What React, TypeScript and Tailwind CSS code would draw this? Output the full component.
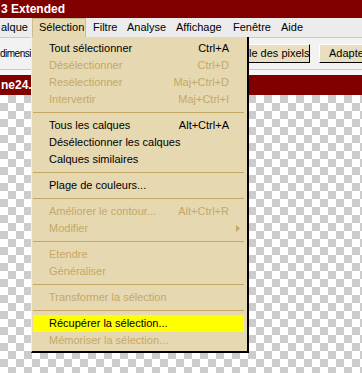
type Item = {
  label: string;
  shortcut?: string;
  disabled?: boolean;
  active?: boolean;
  submenu?: boolean;
};

type Entry = Item | "sep";

const menu: Entry[] = [
  { label: "Tout sélectionner", shortcut: "Ctrl+A" },
  { label: "Désélectionner", shortcut: "Ctrl+D", disabled: true },
  { label: "Resélectionner", shortcut: "Maj+Ctrl+D", disabled: true },
  { label: "Intervertir", shortcut: "Maj+Ctrl+I", disabled: true },
  "sep",
  { label: "Tous les calques", shortcut: "Alt+Ctrl+A" },
  { label: "Désélectionner les calques" },
  { label: "Calques similaires" },
  "sep",
  { label: "Plage de couleurs..." },
  "sep",
  { label: "Améliorer le contour...", shortcut: "Alt+Ctrl+R", disabled: true },
  { label: "Modifier", disabled: true, submenu: true },
  "sep",
  { label: "Etendre", disabled: true },
  { label: "Généraliser", disabled: true },
  "sep",
  { label: "Transformer la sélection", disabled: true },
  "sep",
  { label: "Récupérer la sélection...", active: true },
  { label: "Mémoriser la sélection...", disabled: true },
];

const menubar = [
  { label: "alque", w: "w-[32px]", pl: "pl-[1px]" },
  { label: "Sélection", w: "w-[54px]", pl: "pl-[6px]", open: true },
  { label: "Filtre", w: "w-[35px]", pl: "pl-[7px]" },
  { label: "Analyse", w: "w-[49px]", pl: "pl-[6px]" },
  { label: "Affichage", w: "w-[57px]", pl: "pl-[6px]" },
  { label: "Fenêtre", w: "w-[48px]", pl: "pl-[6px]" },
  { label: "Aide", w: "w-[40px]", pl: "pl-[6px]" },
];

function App() {
  return (
    <div className="relative w-[362px] h-[373px] overflow-hidden flex flex-col bg-white font-['Liberation_Sans',Arial,sans-serif] text-[11px] text-black">
      {/* title bar */}
      <div className="h-[18px] shrink-0 bg-[#800000] text-white font-bold text-[12px] leading-[18px] pl-[1px]">
        3 Extended
      </div>

      {/* menu bar */}
      <div className="h-[19px] shrink-0 bg-[#ececec] flex leading-[19px] whitespace-nowrap">
        {menubar.map((m) => (
          <div
            key={m.label}
            className={`${m.w} ${m.pl} shrink-0 ${
              m.open ? "bg-[#e6d8b0] border border-b-0 border-[#cbbd90] leading-[17px]" : ""
            }`}
          >
            {m.label}
          </div>
        ))}
      </div>

      {/* options bar */}
      <div className="h-[33px] shrink-0 bg-[#f2f2f2] border-t border-t-[#d8cca4] border-b border-b-[#c9c9c9] flex items-center whitespace-nowrap">
        <span className="w-[31px] shrink-0 text-[10px] tracking-[-0.5px]">dimensi</span>
        <div className="ml-[215px] w-[64px] h-[19px] shrink-0 bg-[#e9dfc0] border border-t-white border-l-white border-r-black border-b-black pl-[2px] leading-[17px]">
          le des pixels
        </div>
        <div className="ml-[9px] w-[80px] h-[19px] shrink-0 bg-[#e9dfc0] border border-t-white border-l-white border-r-black border-b-black pl-[9px] leading-[17px]">
          Adapter
        </div>
      </div>

      <div className="h-[5px] shrink-0 bg-[#f7f7f7]" />

      {/* document tab */}
      <div className="h-[20px] shrink-0 bg-[#800000] text-white font-bold text-[12px] leading-[20px] pl-[1px]">
        ne24.
      </div>

      {/* transparent canvas */}
      <div className="flex-1 bg-[conic-gradient(#cccccc_90deg,#ffffff_90deg_180deg,#cccccc_180deg_270deg,#ffffff_270deg)] bg-[length:16px_16px]" />

      {/* open dropdown */}
      <div className="absolute left-[31px] top-[37px] w-[218px] h-[316px] bg-[#e6d8b0] border-l border-l-[#f6efd9] border-r-2 border-r-black border-b-2 border-b-black pl-[1px] pr-[3px] pt-[3px] whitespace-nowrap">
        {menu.map((e, i) =>
          e === "sep" ? (
            <div key={i} className="h-[9px] flex flex-col justify-center">
              <div className="h-[1px] bg-[#c3a763]" />
            </div>
          ) : (
            <div
              key={i}
              className={`h-[17px] flex items-center justify-between pl-[16px] pr-[15px] ${
                e.active ? "bg-[#ffff00]" : ""
              } ${e.disabled ? "text-[#c4a86a]" : "text-black"}`}
            >
              <span>{e.label}</span>
              {e.shortcut && <span>{e.shortcut}</span>}
              {e.submenu && (
                <svg width="4" height="7" viewBox="0 0 4 7" className="-mr-[11px]">
                  <path d="M0 0 L4 3.5 L0 7 Z" fill="#c4a86a" />
                </svg>
              )}
            </div>
          )
        )}
      </div>
    </div>
  );
}

export default App;
